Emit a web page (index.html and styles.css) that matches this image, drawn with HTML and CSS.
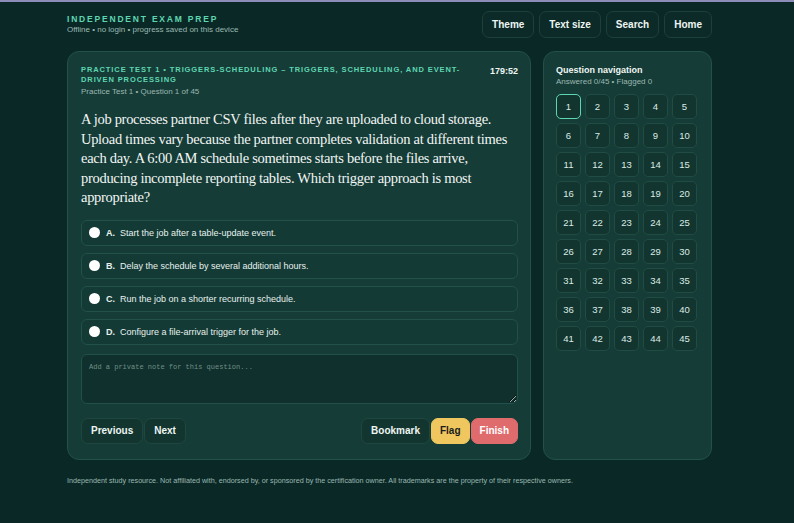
FILE: index.html
```html
<!DOCTYPE html>
<html>
<head>
    <title>Independent Exam Prep</title>
    <link rel="stylesheet" href="styles.css">
</head>
<body>
    <div class="page">
        <header class="topbar">
            <div class="brand">
                <div class="brand-name">Independent Exam Prep</div>
                <div class="brand-sub">Offline • no login • progress saved on this device</div>
            </div>
            <nav class="top-actions">
                <button class="btn">Theme</button>
                <button class="btn">Text size</button>
                <button class="btn">Search</button>
                <button class="btn">Home</button>
            </nav>
        </header>

        <div class="layout">
            <main class="card quiz">
                <div class="quiz-head">
                    <div>
                        <div class="eyebrow">Practice Test 1 • triggers-scheduling – Triggers, Scheduling, and Event-Driven Processing</div>
                        <div class="meta">Practice Test 1 • Question 1 of 45</div>
                    </div>
                    <div class="timer">179:52</div>
                </div>

                <p class="question">A job processes partner CSV files after they are uploaded to cloud storage. Upload times vary because the partner completes validation at different times each day. A 6:00 AM schedule sometimes starts before the files arrive, producing incomplete reporting tables. Which trigger approach is most appropriate?</p>

                <div class="options">
                    <label class="option"><span class="radio"></span><b>A.</b> Start the job after a table-update event.</label>
                    <label class="option"><span class="radio"></span><b>B.</b> Delay the schedule by several additional hours.</label>
                    <label class="option"><span class="radio"></span><b>C.</b> Run the job on a shorter recurring schedule.</label>
                    <label class="option"><span class="radio"></span><b>D.</b> Configure a file-arrival trigger for the job.</label>
                </div>

                <textarea class="note" placeholder="Add a private note for this question..."></textarea>

                <div class="quiz-actions">
                    <div class="group">
                        <button class="btn">Previous</button>
                        <button class="btn">Next</button>
                    </div>
                    <div class="group">
                        <button class="btn">Bookmark</button>
                        <button class="btn btn-flag">Flag</button>
                        <button class="btn btn-finish">Finish</button>
                    </div>
                </div>
            </main>

            <aside class="card sidebar">
                <div class="side-title">Question navigation</div>
                <div class="side-sub">Answered 0/45 • Flagged 0</div>
                <div class="qgrid" id="qgrid"></div>
            </aside>
        </div>

        <footer class="footer">Independent study resource. Not affiliated with, endorsed by, or sponsored by the certification owner. All trademarks are the property of their respective owners.</footer>
    </div>

    <script>
        // build the 45 question buttons
        let grid = document.getElementById("qgrid");
        for (let i = 1; i <= 45; i++) {
            let cell = document.createElement("button");
            cell.className = "qcell" + (i === 1 ? " current" : "");
            cell.textContent = i;
            grid.appendChild(cell);
        }
    </script>
</body>
</html>
```

FILE: styles.css
```css
body {
    margin: 0;
    padding: 0;
    font-family: "Liberation Sans", Arial, sans-serif;
    background-color: #0a2926;
    border-top: 2px solid #8a8eb8;
    color: #e6f2ee;
}

.page {
    width: 645px;
    margin-left: 67px;
}

.topbar {
    display: flex;
    justify-content: space-between;
    align-items: flex-start;
    padding-top: 9px;
}

.brand {
    padding-top: 3px;
}

.brand-name {
    font-size: 8.5px;
    line-height: 10px;
    font-weight: bold;
    text-transform: uppercase;
    letter-spacing: 1.8px;
    color: #5fd6b2;
}

.brand-sub {
    font-size: 8px;
    line-height: 10px;
    color: #9bb8b1;
    margin-top: 1px;
}

.top-actions {
    display: flex;
    gap: 5px;
}

.btn {
    height: 27px;
    padding: 0 9px;
    font-family: "Liberation Sans", Arial, sans-serif;
    font-size: 10px;
    font-weight: bold;
    color: #eef6f3;
    background-color: #0c2b28;
    border: 1px solid #1c403b;
    border-radius: 7px;
    cursor: pointer;
}

.layout {
    display: grid;
    grid-template-columns: 464px 169px;
    gap: 12px;
    margin-top: 13px;
}

.card {
    background-color: #153c37;
    border: 1px solid #22504a;
    border-radius: 12px;
    padding: 13px 12px 15px 13px;
}

.quiz-head {
    display: flex;
    justify-content: space-between;
    gap: 20px;
}

.eyebrow {
    font-size: 7.5px;
    font-weight: bold;
    text-transform: uppercase;
    letter-spacing: 0.9px;
    color: #5fd6b2;
    line-height: 10px;
}

.meta {
    font-size: 8px;
    line-height: 11px;
    color: #9bb8b1;
    margin-top: 1px;
}

.timer {
    font-size: 9px;
    font-weight: bold;
    color: #eef6f3;
    padding-top: 1px;
}

.question {
    font-family: "Liberation Serif", "Times New Roman", serif;
    font-size: 14.5px;
    letter-spacing: -0.3px;
    line-height: 19.5px;
    color: #f2f6f4;
    margin: 13px 0 12px;
}

.options {
    display: flex;
    flex-direction: column;
    gap: 7px;
}

.option {
    display: flex;
    align-items: center;
    height: 26px;
    padding: 0 7px;
    border: 1px solid #22504a;
    border-radius: 6px;
    background-color: #143a35;
    font-size: 9px;
    color: #e6f2ee;
    box-sizing: border-box;
}

.option b {
    margin-right: 5px;
}

.radio {
    width: 11px;
    height: 11px;
    border-radius: 50%;
    background-color: #ffffff;
    margin-right: 6px;
}

.note {
    display: block;
    width: 100%;
    height: 50px;
    box-sizing: border-box;
    margin-top: 9px;
    padding: 8px 7px;
    font-family: "Liberation Mono", monospace;
    font-size: 7px;
    color: #e6f2ee;
    background-color: #0f302c;
    border: 1px solid #22504a;
    border-radius: 6px;
    resize: vertical;
}

.note::placeholder {
    color: #6f8f88;
}

.quiz-actions {
    display: flex;
    justify-content: space-between;
    margin-top: 14px;
}

.group {
    display: flex;
    gap: 1px;
}

.quiz-actions .btn {
    height: 26px;
    padding: 0 9px;
    background-color: #12352f;
    border-color: #1f4741;
}

.quiz-actions .btn-flag {
    padding: 0 8px;
    background-color: #efc75e;
    border-color: #efc75e;
    color: #1b1b1b;
}

.quiz-actions .btn-finish {
    padding: 0 8px;
    background-color: #e06b6d;
    border-color: #e06b6d;
    color: #ffffff;
}

.sidebar {
    padding-left: 12px;
}

.side-title {
    font-size: 9px;
    line-height: 11px;
    font-weight: bold;
    color: #eef6f3;
}

.side-sub {
    font-size: 8px;
    line-height: 10px;
    color: #9bb8b1;
    margin-top: 1px;
}

.qgrid {
    display: grid;
    grid-template-columns: repeat(5, 25px);
    gap: 4px;
    margin-top: 7px;
}

.qcell {
    height: 25px;
    padding: 0;
    font-family: "Liberation Sans", Arial, sans-serif;
    font-size: 9.5px;
    color: #dcebe6;
    background-color: #12352f;
    border: 1px solid #214b45;
    border-radius: 5px;
}

.qcell.current {
    border-color: #5fd6b2;
}

.footer {
    font-size: 7.2px;
    line-height: 9px;
    color: #9bb8b1;
    margin-top: 16px;
}
```
